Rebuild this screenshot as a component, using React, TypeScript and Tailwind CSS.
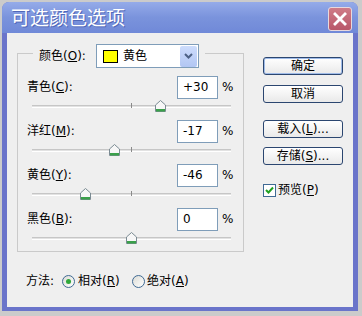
import React from "react";

const F = "font-['DejaVu_Sans','Noto_Sans_CJK_SC',sans-serif]";

function Thumb() {
  return (
    <svg width="11" height="12" viewBox="0 0 11 12">
      <path d="M0.5 5 L5.5 0.5 L10.5 5 V11.5 H0.5 Z" fill="#f7f7f7" stroke="#7b8b93" />
      <rect x="1" y="9" width="9" height="2.5" fill="#3aa04a" />
    </svg>
  );
}

function Row({ label, hot, value }: { label: string; hot: string; value: number }) {
  const left = 113 + value * 0.99 - 5.5;
  const text = value > 0 ? `+${value}` : `${value}`;
  return (
    <div className="h-[44px] flex flex-col">
      <div className="h-[22px] flex items-center">
        <span className="ml-[9px] w-[150px] text-[12px] text-black">
          {label}(<span className="underline">{hot}</span>):
        </span>
        <div className="w-[41px] h-[23px] border border-[#7f9db9] bg-white flex items-center pl-[5px] text-[12px] text-black">
          {text}
        </div>
        <span className="ml-[4px] text-[12px] text-black">%</span>
      </div>
      <div className="relative h-[22px]">
        <div className="mt-[7px] ml-[14px] w-[199px] h-[3px] bg-[#e2e2e2] border-t border-[#c6c6c6] border-b border-b-white" />
        <div className="absolute left-[113px] top-[5px] w-[1px] h-[5px] bg-[#8a8a8a]" />
        <div className="absolute top-[2px]" style={{ left }}>
          <Thumb />
        </div>
      </div>
    </div>
  );
}

function Btn({ children, def }: { children: React.ReactNode; def?: boolean }) {
  return (
    <div
      className={`w-[80px] h-[18px] rounded-[3px] border border-[#2b4670] bg-gradient-to-b from-white to-[#e9e9e9] flex items-center justify-center text-[12px] text-black ${
        def ? "shadow-[inset_0_0_0_1px_#9fbbe8]" : ""
      }`}
    >
      {children}
    </div>
  );
}

export default function App() {
  return (
    <div className={`w-[362px] h-[316px] bg-[#cbcbcb] pt-[2px] pl-[2px] ${F}`}>
      <div className="w-[356px] h-[309px] rounded-t-[7px] bg-[#6a74ca] flex flex-col overflow-hidden">
        <div className="h-[31px] flex items-center bg-gradient-to-b from-[#95abe9] via-[#7a93dc] to-[#7089d8] pl-[9px] pr-[6px]">
          <span className="text-[19px] text-white font-['Noto_Sans_CJK_SC',sans-serif] [text-shadow:1px_1px_0_#5068b8]">
            可选颜色选项
          </span>
          <div className="ml-auto self-start mt-[5px] w-[24px] h-[24px] rounded-[3px] border border-[#e8d8dc] bg-gradient-to-b from-[#cf7b87] to-[#b8586a] flex items-center justify-center">
            <svg width="14" height="14" viewBox="0 0 14 14">
              <path d="M2 2 L12 12 M12 2 L2 12" stroke="white" strokeWidth="2.8" strokeLinecap="square" />
            </svg>
          </div>
        </div>
        <div className="mx-[5px] mb-[4px] flex-1 bg-[#efefef] flex pl-[10px]">
          <div className="flex flex-col pt-[20px]">
            <div className="w-[227px] h-[199px] border border-[#cacaca]">
              <div className="-mt-[10px] ml-[15px] w-fit bg-[#efefef] px-[6px] flex items-center">
                <span className="w-[57px] text-[12px] text-black">
                  颜色(<span className="underline">O</span>):
                </span>
                <div className="w-[103px] h-[24px] border border-[#7f9db9] bg-white flex items-center pl-[6px]">
                  <div className="w-[15px] h-[13px] border border-black bg-[#ffff00]" />
                  <span className="ml-[5px] text-[12px] text-black">黄色</span>
                  <div className="ml-auto mr-[1px] w-[17px] h-[21px] rounded-[2px] bg-gradient-to-b from-[#cddcfc] to-[#b2c6f3] flex items-center justify-center">
                    <svg width="9" height="6" viewBox="0 0 9 6">
                      <path d="M1 1 L4.5 4.5 L8 1" stroke="#4d6185" strokeWidth="2" fill="none" />
                    </svg>
                  </div>
                </div>
              </div>
              <div className="mt-[8px]">
                <Row label="青色" hot="C" value={30} />
                <Row label="洋红" hot="M" value={-17} />
                <Row label="黄色" hot="Y" value={-46} />
                <Row label="黑色" hot="B" value={0} />
              </div>
            </div>
            <div className="mt-[21px] ml-[9px] h-[16px] flex items-center text-[12px] text-black">
              <span>方法:</span>
              <div className="ml-[8px] w-[13px] h-[13px] rounded-full border border-[#3f6a94] bg-gradient-to-br from-[#dcdcd6] to-white flex items-center justify-center">
                <div className="w-[5px] h-[5px] rounded-full bg-[#2fa83a]" />
              </div>
              <span className="ml-[3px] w-[54px]">
                相对(<span className="underline">R</span>)
              </span>
              <div className="w-[13px] h-[13px] rounded-full border border-[#3f6a94] bg-gradient-to-br from-[#dcdcd6] to-white" />
              <span className="ml-[2px]">
                绝对(<span className="underline">A</span>)
              </span>
            </div>
          </div>
          <div className="ml-[19px] pt-[24px] flex flex-col">
            <Btn def>确定</Btn>
            <div className="mt-[10px]">
              <Btn>取消</Btn>
            </div>
            <div className="mt-[17px]">
              <Btn>
                载入(<span className="underline">L</span>)...
              </Btn>
            </div>
            <div className="mt-[9px]">
              <Btn>
                存储(<span className="underline">S</span>)...
              </Btn>
            </div>
            <div className="mt-[16px] flex items-center text-[12px] text-black">
              <div className="w-[13px] h-[13px] border border-[#3f6a94] bg-white flex items-center justify-center">
                <svg width="9" height="8" viewBox="0 0 9 8">
                  <path d="M1 4 L3.5 6.5 L8 1.5" stroke="#21a121" strokeWidth="2" fill="none" />
                </svg>
              </div>
              <span className="ml-[2px]">
                预览(<span className="underline">P</span>)
              </span>
            </div>
          </div>
        </div>
      </div>
    </div>
  );
}
